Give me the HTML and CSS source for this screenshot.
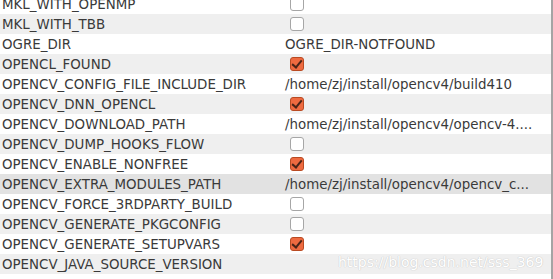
FILE: index.html
```html
<!DOCTYPE html>
<html>
<head>
<meta charset="utf-8">
<link rel="stylesheet" href="styles.css">
</head>
<body>
<div class="table">
  <div class="row"><div class="name">MKL_WITH_OPENMP</div><div class="val"><span class="cb"></span></div></div>
  <div class="row alt"><div class="name">MKL_WITH_TBB</div><div class="val"><span class="cb"></span></div></div>
  <div class="row"><div class="name">OGRE_DIR</div><div class="val"><span class="txt">OGRE_DIR-NOTFOUND</span></div></div>
  <div class="row alt"><div class="name">OPENCL_FOUND</div><div class="val"><span class="cb on"></span></div></div>
  <div class="row"><div class="name">OPENCV_CONFIG_FILE_INCLUDE_DIR</div><div class="val"><span class="txt">/home/zj/install/opencv4/build410</span></div></div>
  <div class="row alt"><div class="name">OPENCV_DNN_OPENCL</div><div class="val"><span class="cb on"></span></div></div>
  <div class="row"><div class="name">OPENCV_DOWNLOAD_PATH</div><div class="val"><span class="txt">/home/zj/install/opencv4/opencv-4....</span></div></div>
  <div class="row alt"><div class="name">OPENCV_DUMP_HOOKS_FLOW</div><div class="val"><span class="cb"></span></div></div>
  <div class="row"><div class="name">OPENCV_ENABLE_NONFREE</div><div class="val"><span class="cb on"></span></div></div>
  <div class="row hover"><div class="name">OPENCV_EXTRA_MODULES_PATH</div><div class="val"><span class="txt">/home/zj/install/opencv4/opencv_c...</span></div></div>
  <div class="row"><div class="name">OPENCV_FORCE_3RDPARTY_BUILD</div><div class="val"><span class="cb"></span></div></div>
  <div class="row alt"><div class="name">OPENCV_GENERATE_PKGCONFIG</div><div class="val"><span class="cb"></span></div></div>
  <div class="row"><div class="name">OPENCV_GENERATE_SETUPVARS</div><div class="val"><span class="cb on"></span></div></div>
  <div class="row alt"><div class="name">OPENCV_JAVA_SOURCE_VERSION</div><div class="val"></div></div>
  <div class="row"><div class="name"></div><div class="val"></div></div>
  <div class="watermark">https://blog.csdn.net/sss_369</div>
</div>
</body>
</html>
```

FILE: styles.css
```css
html, body {
  margin: 0;
  padding: 0;
  background: #ffffff;
  overflow: hidden;
}
.table {
  position: relative;
  width: 551px;
  height: 279px;
  border-right: 2px solid #a4a4a4;
  overflow: hidden;
  font-family: "DejaVu Sans", sans-serif;
  font-size: 13.4px;
  color: #3a3a3a;
}
.table > .row:first-child {
  margin-top: -6px;
}
.row {
  display: grid;
  grid-template-columns: 283px 264px;
  height: 20px;
  align-items: center;
  background: #ffffff;
}
.row.alt {
  background: #efefef;
}
.row.hover {
  background: #e2e2e2;
}
.name {
  padding-left: 2px;
  padding-top: 2px;
  white-space: nowrap;
  overflow: hidden;
  line-height: 18px;
}
.val {
  padding-left: 2px;
  display: flex;
  align-items: center;
  height: 20px;
  overflow: hidden;
  white-space: nowrap;
}
.txt {
  padding-top: 2px;
  line-height: 18px;
}
.cb {
  box-sizing: border-box;
  width: 14px;
  height: 14px;
  margin-left: 5px;
  border: 1px solid #a6a6a6;
  border-radius: 3px;
  background: #ffffff;
  position: relative;
}
.cb.on {
  background: #ee6a40;
  border-color: #b94a22;
}
.cb.on::after {
  content: "";
  position: absolute;
  left: 3px;
  top: 0px;
  width: 4px;
  height: 8px;
  border-right: 2px solid #4a2418;
  border-bottom: 2px solid #4a2418;
  transform: rotate(40deg);
}
.watermark {
  position: absolute;
  left: 338px;
  top: 254px;
  font-family: "DejaVu Sans", sans-serif;
  font-size: 14px;
  color: #ffffff;
  text-shadow: 0 0 1px #c8c8c8, 0 0 1px #c8c8c8;
}
```
